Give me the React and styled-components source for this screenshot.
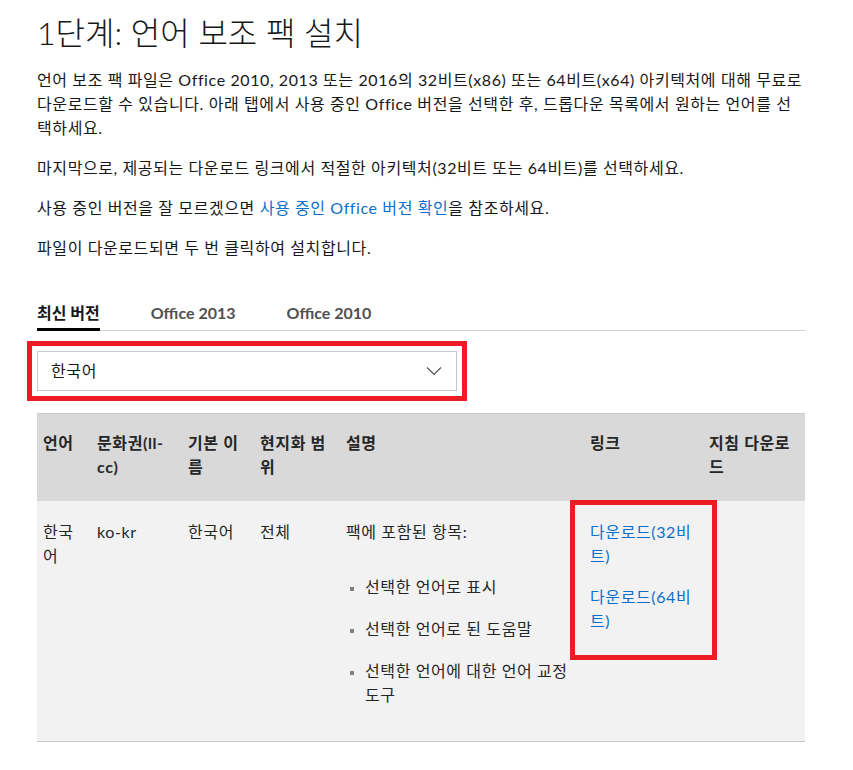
import styled, { createGlobalStyle } from 'styled-components';

const GlobalStyle = createGlobalStyle`
  body {
    margin: 0;
    background: #fff;
    color: #171717;
    font-family: Lato, "Noto Sans CJK KR", sans-serif;
    font-size: 16px;
    letter-spacing: 0.6px;
    line-height: 24px;
  }
`;

const Page = styled.main`
  width: 768px;
  margin-left: 37px;
  padding-top: 12px;
`;

const Title = styled.h1`
  margin: 0 0 14px;
  font-size: 32px;
  font-weight: 300;
  letter-spacing: 0;
  line-height: 42px;
  color: #171717;
`;

const Para = styled.p`
  margin: 0 0 16px;
`;

const Link = styled.a`
  color: #0b6fcc;
  text-decoration: none;
`;

const TabBar = styled.div`
  display: flex;
  gap: 51px;
  margin-top: 41px;
  border-bottom: 1px solid #d2d2d2;
`;

const Tab = styled.button`
  background: none;
  border: 0;
  padding: 0 0 3px;
  margin-bottom: -1px;
  font: inherit;
  font-size: 16px;
  font-weight: 700;
  line-height: 24px;
  color: ${(p) => (p.$active ? '#171717' : '#505050')};
  border-bottom: 3px solid ${(p) => (p.$active ? '#000' : 'transparent')};
  cursor: pointer;
`;

const RedFrame = styled.div`
  display: inline-block;
  border: 5px solid #ed1c24;
  padding: 5px;
  margin: 10px 0 0 -10px;
`;

const Select = styled.div`
  width: 420px;
  height: 40px;
  box-sizing: border-box;
  border: 1px solid #c8c8c8;
  display: flex;
  align-items: center;
  justify-content: space-between;
  padding: 0 14px 0 13px;
  color: #171717;
`;

const Table = styled.table`
  width: 768px;
  margin-top: 12px;
  table-layout: fixed;
  border-collapse: collapse;
  border-top: 1px solid #c8c8c8;
  border-bottom: 1px solid #c8c8c8;
`;

const HeadRow = styled.tr`
  background: #d9d9d9;
`;

const BodyRow = styled.tr`
  background: #f2f2f2;
`;

const Th = styled.th`
  text-align: left;
  vertical-align: top;
  font-weight: 700;
  padding: 17px 6px 22px;
  color: #262626;
`;

const Td = styled.td`
  vertical-align: top;
  padding: 19px 6px 34px;
  color: #262626;
  position: relative;
`;

const Items = styled.ul`
  margin: 31px 0 0;
  padding-left: 19px;
  list-style: square;

  li {
    margin-bottom: 18px;
  }
  li:last-child {
    margin-bottom: 0;
  }
  li::marker {
    color: #808080;
    font-size: 12px;
  }
`;

const LinkPara = styled.p`
  margin: 0 0 17px;
`;

const Highlight = styled.div`
  position: absolute;
  top: -1px;
  left: -14px;
  width: 147px;
  height: 160px;
  box-sizing: border-box;
  border: 5px solid #ed1c24;
  pointer-events: none;
`;

const Chevron = () => (
  <svg width="16" height="10" viewBox="0 0 16 10" fill="none">
    <path d="M1 1.5 L8 8.5 L15 1.5" stroke="#505050" strokeWidth="1.1" />
  </svg>
);

const columns = [54, 91, 72, 86, 244, 119, 102];

export default function App() {
  return (
    <Page>
      <GlobalStyle />
      <Title>1단계: 언어 보조 팩 설치</Title>
      <Para>
        언어 보조 팩 파일은 Office 2010, 2013 또는 2016의 32비트(x86) 또는 64비트(x64) 아키텍처에 대해 무료로
        다운로드할 수 있습니다. 아래 탭에서 사용 중인 Office 버전을 선택한 후, 드롭다운 목록에서 원하는 언어를
        선택하세요.
      </Para>
      <Para>마지막으로, 제공되는 다운로드 링크에서 적절한 아키텍처(32비트 또는 64비트)를 선택하세요.</Para>
      <Para>
        사용 중인 버전을 잘 모르겠으면 <Link href="#">사용 중인 Office 버전 확인</Link>을 참조하세요.
      </Para>
      <Para>파일이 다운로드되면 두 번 클릭하여 설치합니다.</Para>

      <TabBar>
        <Tab $active>최신 버전</Tab>
        <Tab>Office 2013</Tab>
        <Tab>Office 2010</Tab>
      </TabBar>

      <RedFrame>
        <Select>
          <span>한국어</span>
          <Chevron />
        </Select>
      </RedFrame>

      <Table>
        <colgroup>
          {columns.map((w, i) => (
            <col key={i} style={{ width: w }} />
          ))}
        </colgroup>
        <thead>
          <HeadRow>
            <Th>언어</Th>
            <Th>문화권(ll-cc)</Th>
            <Th>기본 이름</Th>
            <Th>현지화 범위</Th>
            <Th>설명</Th>
            <Th>링크</Th>
            <Th>지침 다운로드</Th>
          </HeadRow>
        </thead>
        <tbody>
          <BodyRow>
            <Td>한국어</Td>
            <Td>ko-kr</Td>
            <Td>한국어</Td>
            <Td>전체</Td>
            <Td>
              팩에 포함된 항목:
              <Items>
                <li>선택한 언어로 표시</li>
                <li>선택한 언어로 된 도움말</li>
                <li>선택한 언어에 대한 언어 교정 도구</li>
              </Items>
            </Td>
            <Td>
              <Highlight />
              <LinkPara>
                <Link href="#">다운로드(32비트)</Link>
              </LinkPara>
              <LinkPara>
                <Link href="#">다운로드(64비트)</Link>
              </LinkPara>
            </Td>
            <Td />
          </BodyRow>
        </tbody>
      </Table>
    </Page>
  );
}
